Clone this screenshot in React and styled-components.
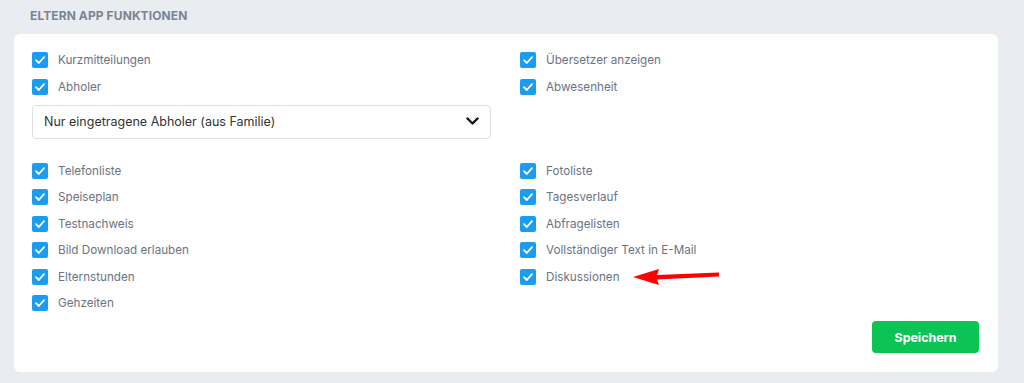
import styled, { createGlobalStyle } from "styled-components";

const GlobalStyle = createGlobalStyle`
    body {
        margin: 0;
        background: #e9edf2;
        font-family: Inter, "Noto Sans", sans-serif;
    }
`;

const leftTop = ["Kurzmitteilungen", "Abholer"];
const rightTop = ["Übersetzer anzeigen", "Abwesenheit"];
const leftBottom = ["Telefonliste", "Speiseplan", "Testnachweis", "Bild Download erlauben", "Elternstunden", "Gehzeiten"];
const rightBottom = ["Fotoliste", "Tagesverlauf", "Abfragelisten", "Vollständiger Text in E-Mail", "Diskussionen"];

function CheckItem({ label, arrow = false }) {
    return (
        <Item>
            <Box>
                <svg width="10" height="8" viewBox="0 0 10 8">
                    <path d="M1 4.2 L3.8 7 L9 1.2" fill="none" stroke="#fff" strokeWidth="1.8" strokeLinecap="round" strokeLinejoin="round" />
                </svg>
            </Box>
            <span>{label}</span>
            {arrow && (
                <Arrow width="90" height="20" viewBox="0 0 90 20">
                    <polygon points="1,10 27,2 25,8 87,5.5 87,9.5 25,12.5 27,18" fill="#f00" />
                </Arrow>
            )}
        </Item>
    );
}

export default function App() {
    return (
        <Page>
            <GlobalStyle />
            <Title>ELTERN APP FUNKTIONEN</Title>
            <Card>
                <Grid>
                    <Column>
                        {leftTop.map(l => <CheckItem key={l} label={l} />)}
                        <Select>
                            <span>Nur eingetragene Abholer (aus Familie)</span>
                            <svg width="13" height="9" viewBox="0 0 13 9">
                                <path d="M1.5 1.5 L6.5 6.5 L11.5 1.5" fill="none" stroke="#111" strokeWidth="2.4" strokeLinecap="round" strokeLinejoin="round" />
                            </svg>
                        </Select>
                    </Column>
                    <Column>
                        {rightTop.map(l => <CheckItem key={l} label={l} />)}
                    </Column>
                </Grid>
                <Grid $top={24}>
                    <Column>
                        {leftBottom.map(l => <CheckItem key={l} label={l} />)}
                    </Column>
                    <Column>
                        {rightBottom.map(l => <CheckItem key={l} label={l} arrow={l === "Diskussionen"} />)}
                    </Column>
                </Grid>
                <Footer>
                    <Button>Speichern</Button>
                </Footer>
            </Card>
        </Page>
    );
}

const Page = styled.div`
    padding: 9px 26px 11px 14px;
`;

const Title = styled.h2`
    margin: 0 0 12px 16px;
    font-size: 12px;
    font-weight: 700;
    color: #7b8494;
    letter-spacing: 0.1px;
    line-height: 13px;
`;

const Card = styled.div`
    background: #fff;
    border-radius: 6px;
    padding: 18px 19px 19px 18px;
`;

const Grid = styled.div`
    display: grid;
    grid-template-columns: 488px 1fr;
    margin-top: ${props => props.$top || 0}px;
`;

const Column = styled.div`
    display: flex;
    flex-direction: column;
    align-items: flex-start;
    gap: 10.5px;
`;

const Item = styled.div`
    position: relative;
    display: flex;
    align-items: center;
    gap: 10px;
    height: 16px;
    font-size: 11.7px;
    color: #6b7385;
`;

const Box = styled.div`
    width: 16px;
    height: 16px;
    border-radius: 2px;
    background: #1a9cf0;
    display: flex;
    align-items: center;
    justify-content: center;
`;

const Arrow = styled.svg`
    position: absolute;
    left: 112px;
    top: -2px;
`;

const Select = styled.div`
    box-sizing: border-box;
    width: 459px;
    height: 34px;
    margin-top: -0.5px;
    border: 1px solid #dcdfe3;
    border-radius: 4px;
    display: flex;
    align-items: center;
    justify-content: space-between;
    padding: 0 11px 0 11px;
    font-size: 12.5px;
    color: #333;
`;

const Footer = styled.div`
    display: flex;
    justify-content: flex-end;
    margin-top: 10px;
`;

const Button = styled.button`
    width: 107px;
    height: 32px;
    border: none;
    border-radius: 4px;
    background: #0cc454;
    color: #fff;
    font-family: Inter, "Noto Sans", sans-serif;
    font-size: 12.4px;
    font-weight: 700;
`;
